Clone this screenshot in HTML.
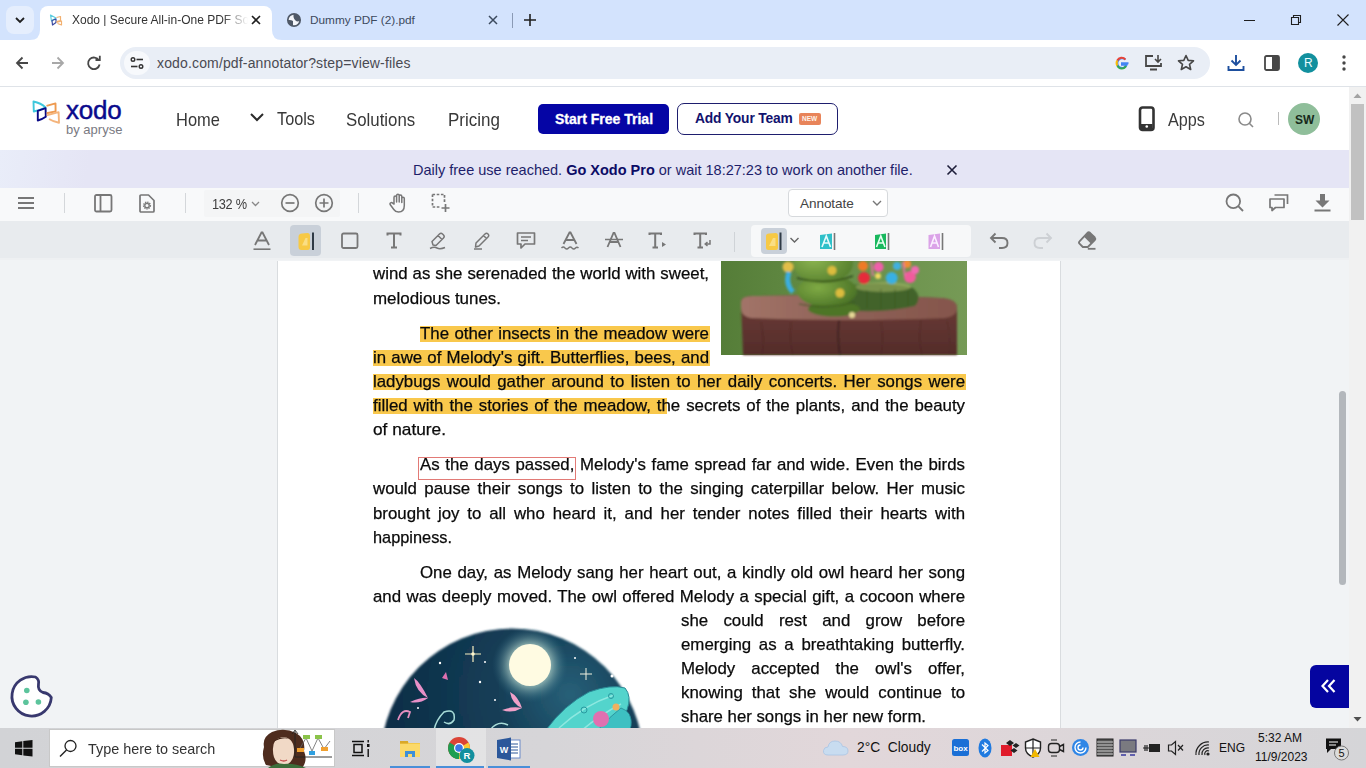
<!DOCTYPE html>
<html><head><meta charset="utf-8">
<style>
*{box-sizing:border-box;margin:0;padding:0}
html,body{width:1366px;height:768px;overflow:hidden;background:#fff;font-family:"Liberation Sans",sans-serif;}
.a{position:absolute}
.t{position:absolute;white-space:pre;line-height:1}
svg{position:absolute;overflow:visible}
</style></head><body>

<!-- ===== TAB STRIP ===== -->
<div class="a" style="left:0;top:0;width:1366px;height:40px;background:#d3e3fd"></div>
<div class="a" style="left:6px;top:6px;width:28px;height:28px;border-radius:8px;background:#e5eefd"></div>
<svg style="left:0;top:0" width="40" height="40"><path d="M16 18 L20 22 L24 18" fill="none" stroke="#1f1f1f" stroke-width="1.8"/></svg>
<!-- active tab -->
<div class="a" style="left:40px;top:6px;width:232px;height:36px;border-radius:8px 8px 0 0;background:#fff"></div>
<svg style="left:30px;top:30px" width="10" height="10"><path d="M0 10 L10 10 L10 0 Q10 10 0 10Z" fill="#fff"/></svg>
<svg style="left:272px;top:30px" width="10" height="10"><path d="M0 0 L0 10 L10 10 Q0 10 0 0Z" fill="#fff"/></svg>
<svg style="left:49px;top:14px" width="14" height="12"><path d="M1.5 1 L7 4 L2.5 7Z" fill="none" stroke="#5ccde0" stroke-width="1.2" stroke-linejoin="round"/><path d="M3 6.5 L7 5 L7 8.5 L3.5 11Z" fill="none" stroke="#3a4aa0" stroke-width="1.2" stroke-linejoin="round"/><path d="M7.5 3.5 L11.5 2.5 V6.5 L7.5 7.5 M7.5 8.5 L12.5 7 V11 L8.5 9.5" fill="none" stroke="#f2b070" stroke-width="1.2" stroke-linejoin="round"/></svg>
<div class="t" style="left:72px;top:14px;font-size:12px;color:#333;width:178px;overflow:hidden;-webkit-mask-image:linear-gradient(90deg,#000 150px,transparent 176px)">Xodo | Secure All-in-One PDF Software</div>
<svg style="left:250px;top:14px" width="12" height="12"><path d="M2 2 L10 10 M10 2 L2 10" stroke="#1f1f1f" stroke-width="1.6"/></svg>
<!-- tab 2 -->
<svg style="left:286px;top:12px" width="16" height="16"><circle cx="8" cy="8" r="6.2" fill="#f4f6fb" stroke="#4f5968" stroke-width="1.7"/><path d="M7.5 2 Q12 2 14 6 L14 9 Q11 10 9.5 8.5 Q8 7 7.5 5Z" fill="#4f5968"/><path d="M2 8 Q5 7.5 7 9 L7 14 Q3 13 2 10Z" fill="#4f5968"/></svg>
<div class="t" style="left:310px;top:15px;font-size:11.8px;color:#3c4a5e">Dummy PDF (2).pdf</div>
<svg style="left:487px;top:14px" width="12" height="12"><path d="M2 2 L10 10 M10 2 L2 10" stroke="#3c4a5e" stroke-width="1.5"/></svg>
<div class="a" style="left:512px;top:13px;width:1px;height:15px;background:#8a9ab5"></div>
<svg style="left:522px;top:12px" width="16" height="16"><path d="M8 2 V14 M2 8 H14" stroke="#1f1f1f" stroke-width="1.6"/></svg>
<!-- window controls -->
<svg style="left:1244px;top:14px" width="12" height="12"><path d="M0 6.5 H11" stroke="#1f1f1f" stroke-width="1"/></svg>
<svg style="left:1290px;top:14px" width="12" height="12"><path d="M1.5 3.5 H8.5 V10.5 H1.5Z M3.5 3.5 V1.5 H10.5 V8.5 H8.5" fill="none" stroke="#1f1f1f" stroke-width="1.1"/></svg>
<svg style="left:1337px;top:14px" width="12" height="12"><path d="M0.5 0.5 L11.5 11.5 M11.5 0.5 L0.5 11.5" stroke="#1f1f1f" stroke-width="1.1"/></svg>

<!-- ===== TOOLBAR ===== -->
<div class="a" style="left:0;top:40px;width:1366px;height:47px;background:#fff;border-bottom:1px solid #dfe3e8;border-radius:0 8px 0 0"></div>
<svg style="left:12px;top:53px" width="20" height="20"><path d="M16 10 H5 M10.5 4.5 L5 10 L10.5 15.5" fill="none" stroke="#474747" stroke-width="1.8"/></svg>
<svg style="left:48px;top:53px" width="20" height="20"><path d="M4 10 H15 M9.5 4.5 L15 10 L9.5 15.5" fill="none" stroke="#a8a8a8" stroke-width="1.8"/></svg>
<svg style="left:84px;top:53px" width="20" height="20"><path d="M15 7.5 A5.8 5.8 0 1 0 15.6 11.5" fill="none" stroke="#474747" stroke-width="1.8"/><path d="M11.5 7 H15.8 V2.8" fill="none" stroke="#474747" stroke-width="1.8"/></svg>
<div class="a" style="left:120px;top:47px;width:1090px;height:32px;border-radius:16px;background:#e9eef6"></div>
<div class="a" style="left:124px;top:51px;width:26px;height:24px;border-radius:12px;background:#f7f9fc"></div>
<svg style="left:129px;top:55px" width="16" height="16"><circle cx="4" cy="4.5" r="1.8" fill="none" stroke="#333" stroke-width="1.4"/><path d="M7.5 4.5 H14" stroke="#333" stroke-width="1.6"/><circle cx="12" cy="11.5" r="1.8" fill="none" stroke="#333" stroke-width="1.4"/><path d="M2 11.5 H8.5" stroke="#333" stroke-width="1.6"/></svg>
<div class="t" style="left:157px;top:56px;font-size:14px;letter-spacing:0.15px;color:#4a4a52">xodo.com/pdf-annotator?step=view-files</div>
<!-- right toolbar icons -->
<svg style="left:1114px;top:55px" width="16" height="16"><path d="M14.5 8.2 H8 V9.8 H12.6 A4.8 4.8 0 1 1 11.4 4.6" fill="none" stroke="#4285f4" stroke-width="2"/><path d="M3.3 5.5 A4.8 4.8 0 0 1 11.4 4.6" fill="none" stroke="#ea4335" stroke-width="2"/><path d="M3.3 5.5 A4.8 4.8 0 0 0 3.4 10.6" fill="none" stroke="#fbbc05" stroke-width="2"/><path d="M3.4 10.6 A4.8 4.8 0 0 0 12 11" fill="none" stroke="#34a853" stroke-width="2"/></svg>
<svg style="left:1144px;top:53px" width="20" height="20"><path d="M9 3 H2 V13 H17 V10" fill="none" stroke="#474747" stroke-width="1.8"/><path d="M6 16.5 H13" stroke="#474747" stroke-width="2"/><path d="M14 2 V9 M11 6 L14 9 L17 6" fill="none" stroke="#474747" stroke-width="1.6"/></svg>
<svg style="left:1176px;top:53px" width="20" height="20"><path d="M10 2.5 L12.2 7.4 L17.5 7.8 L13.5 11.3 L14.7 16.5 L10 13.8 L5.3 16.5 L6.5 11.3 L2.5 7.8 L7.8 7.4Z" fill="none" stroke="#474747" stroke-width="1.6" stroke-linejoin="round"/></svg>
<svg style="left:1226px;top:53px" width="20" height="20"><path d="M10 2 V12 M5.5 7.5 L10 12 L14.5 7.5" fill="none" stroke="#1d4f9e" stroke-width="1.9"/><path d="M2.5 13 V17 H17.5 V13" fill="none" stroke="#1d4f9e" stroke-width="1.9"/></svg>
<svg style="left:1262px;top:53px" width="20" height="20"><rect x="3" y="3" width="14" height="14" rx="1.5" fill="none" stroke="#474747" stroke-width="1.8"/><rect x="10" y="3" width="7" height="14" fill="#474747"/></svg>
<div class="a" style="left:1298px;top:53px;width:20px;height:20px;border-radius:10px;background:#12909e"></div>
<div class="t" style="left:1304px;top:57px;font-size:12px;color:#eafcff">R</div>
<svg style="left:1340px;top:53px" width="8" height="20"><circle cx="4" cy="4" r="1.7" fill="#474747"/><circle cx="4" cy="10" r="1.7" fill="#474747"/><circle cx="4" cy="16" r="1.7" fill="#474747"/></svg>

<!-- ===== PAGE ===== -->
<!-- header -->
<div class="a" style="left:0;top:87px;width:1349px;height:63px;background:#fff"></div>
<svg style="left:32px;top:100px" width="30" height="25">
 <path d="M1.5 1.5 Q9 3 13.5 7.5 Q8 10 1.8 11.5 Z" fill="none" stroke="#3ec8dc" stroke-width="1.9" stroke-linejoin="round"/>
 <path d="M5.8 10.8 L13.6 8.2 L13.8 16.8 Q10 19.5 5.8 20.5 Z" fill="none" stroke="#0a0a86" stroke-width="1.9" stroke-linejoin="round"/>
 <path d="M14.5 5.8 L23.5 3.4 L23.6 11.4 L14.6 13.3" fill="none" stroke="#ee9a50" stroke-width="1.9" stroke-linejoin="round"/>
 <path d="M14.6 15.4 L26.6 12.2 L27 22.8 Q21 21.5 17 19" fill="none" stroke="#f4b47c" stroke-width="1.9" stroke-linejoin="round"/>
</svg>
<div class="t" style="left:66px;top:97px;font-size:26px;color:#0a0a8c;letter-spacing:-0.2px;-webkit-text-stroke:0.45px #0a0a8c">xodo</div>
<div class="t" style="left:66px;top:123px;font-size:13px;color:#7a7a82">by apryse</div>
<div class="t" style="left:176px;top:111.5px;font-size:17.8px;color:#383838;transform:scaleX(0.925);transform-origin:0 0">Home</div>
<svg style="left:248px;top:110px" width="18" height="14"><path d="M3 4 L9 10 L15 4" fill="none" stroke="#2b2b2b" stroke-width="2"/></svg>
<div class="t" style="left:277px;top:110.5px;font-size:17.8px;color:#383838;transform:scaleX(0.915);transform-origin:0 0">Tools</div>
<div class="t" style="left:346px;top:111.5px;font-size:17.8px;color:#383838;transform:scaleX(0.945);transform-origin:0 0">Solutions</div>
<div class="t" style="left:448px;top:111.5px;font-size:17.8px;color:#383838;transform:scaleX(0.955);transform-origin:0 0">Pricing</div>
<div class="a" style="left:538px;top:104px;width:131px;height:30px;border-radius:5px;background:#0505a5"></div>
<div class="t" style="left:555px;top:112px;font-size:14px;font-weight:700;color:#fff;-webkit-text-stroke:0.3px #fff">Start Free Trial</div>
<div class="a" style="left:677px;top:103px;width:161px;height:32px;border-radius:7px;border:1.5px solid #1e1e6e;background:#fff"></div>
<div class="t" style="left:695px;top:112px;font-size:13.8px;letter-spacing:-0.15px;font-weight:700;color:#12126e">Add Your Team</div>
<div class="a" style="left:799px;top:113px;width:22px;height:12px;border-radius:2px;background:#e8845a"></div>
<div class="t" style="left:802px;top:116px;font-size:6.5px;font-weight:700;color:#fff4ec">NEW</div>
<svg style="left:1138px;top:106px" width="18" height="26"><rect x="2" y="1.5" width="13.5" height="22.5" rx="2.5" fill="none" stroke="#333" stroke-width="2.6"/><rect x="3" y="18" width="11.5" height="5" fill="#333"/><circle cx="8.75" cy="20.5" r="1.3" fill="#fff"/></svg>
<div class="t" style="left:1168px;top:111.5px;font-size:17.8px;color:#3a3a3a;transform:scaleX(0.91);transform-origin:0 0">Apps</div>
<svg style="left:1236px;top:110px" width="20" height="20"><circle cx="9" cy="9" r="6" fill="none" stroke="#8a8a8a" stroke-width="1.6"/><path d="M13.3 13.3 L17 17" stroke="#8a8a8a" stroke-width="1.6"/></svg>
<div class="a" style="left:1278px;top:112px;width:1px;height:13px;background:#bbb"></div>
<div class="a" style="left:1288px;top:103px;width:32px;height:32px;border-radius:16px;background:#8fbe9a"></div>
<div class="t" style="left:1295px;top:114px;font-size:12px;font-weight:700;color:#172a1a">SW</div>
<!-- banner -->
<div class="a" style="left:0;top:150px;width:1349px;height:38px;background:linear-gradient(100deg,#e9edf9 0px,#e5e5f5 90px,#e5e5f5 100%)"></div>
<!-- toolbar 1 -->
<div class="a" style="left:0;top:188px;width:1349px;height:33px;background:#f8f9fa"></div>
<!-- toolbar 2 -->
<div class="a" style="left:0;top:221px;width:1349px;height:37px;background:#e8ebee"></div>
<!-- banner text -->
<div class="t" style="left:413px;top:163px;font-size:14.5px;color:#1e1e6a">Daily free use reached. <b style="color:#0c0c66">Go Xodo Pro</b> or wait 18:27:23 to work on another file.</div>
<svg style="left:945px;top:163px" width="14" height="14"><path d="M2.5 2.5 L11.5 11.5 M11.5 2.5 L2.5 11.5" stroke="#1e1e3a" stroke-width="1.6"/></svg>
<!-- toolbar1 icons -->
<svg style="left:18px;top:197px" width="17" height="12"><path d="M0 1 H16 M0 6 H16 M0 11 H16" stroke="#777" stroke-width="1.8"/></svg>
<div class="a" style="left:64px;top:193px;width:1px;height:20px;background:#d4d7da"></div>
<svg style="left:94px;top:194px" width="19" height="19"><rect x="1" y="1" width="16.5" height="16.5" rx="1.5" fill="none" stroke="#777" stroke-width="1.8"/><path d="M6.5 1 V17.5" stroke="#777" stroke-width="1.8"/></svg>
<svg style="left:139px;top:194px" width="17" height="19"><path d="M1 2 Q1 1 2 1 H9.5 L15 6.5 V17 Q15 18 14 18 H2 Q1 18 1 17Z" fill="none" stroke="#777" stroke-width="1.7" stroke-linejoin="round"/><circle cx="8" cy="11.5" r="3.3" fill="none" stroke="#777" stroke-width="1.6" stroke-dasharray="1.3 0.9"/><circle cx="8" cy="11.5" r="2.2" fill="none" stroke="#777" stroke-width="1.3"/></svg>
<div class="a" style="left:185px;top:193px;width:1px;height:20px;background:#d4d7da"></div>
<div class="a" style="left:204px;top:190px;width:136px;height:27px;background:#f4f5f6;border-radius:2px"></div>
<div class="t" style="left:212px;top:197px;font-size:14px;color:#3f3f3f;letter-spacing:-0.3px;transform:scaleX(0.91);transform-origin:0 0">132 %</div>
<svg style="left:251px;top:200px" width="10" height="8"><path d="M1 2 L4.5 5.5 L8 2" fill="none" stroke="#888" stroke-width="1.3"/></svg>
<svg style="left:280px;top:193px" width="20" height="20"><circle cx="10" cy="10" r="8.3" fill="none" stroke="#777" stroke-width="1.7"/><path d="M5.5 10 H14.5" stroke="#777" stroke-width="1.7"/></svg>
<svg style="left:314px;top:193px" width="20" height="20"><circle cx="10" cy="10" r="8.3" fill="none" stroke="#777" stroke-width="1.7"/><path d="M5.5 10 H14.5 M10 5.5 V14.5" stroke="#777" stroke-width="1.7"/></svg>
<div class="a" style="left:358px;top:193px;width:1px;height:20px;background:#d4d7da"></div>
<svg style="left:388px;top:193px" width="20" height="21"><path d="M6 11 V4.5 Q6 3 7.3 3 Q8.6 3 8.6 4.5 V9 V2.8 Q8.6 1.3 9.9 1.3 Q11.2 1.3 11.2 2.8 V9 V3.5 Q11.2 2 12.5 2 Q13.8 2 13.8 3.5 V9.5 V5.5 Q13.8 4.2 15 4.2 Q16.3 4.2 16.3 5.5 V12.5 Q16.3 19 10.5 19 Q7.5 19 5.8 16.5 L2.3 11.8 Q1.5 10.5 2.7 9.8 Q3.8 9.2 4.8 10.3 Z" fill="none" stroke="#777" stroke-width="1.5" stroke-linejoin="round"/></svg>
<svg style="left:431px;top:193px" width="20" height="20"><path d="M1.5 1.5 H13.5 V9 M1.5 1.5 V14 H9" fill="none" stroke="#777" stroke-width="1.7" stroke-dasharray="2.6 1.6"/><path d="M14.5 11 V19 M10.5 15 H18.5" stroke="#777" stroke-width="1.7"/></svg>
<div class="a" style="left:788px;top:189px;width:100px;height:28px;border:1px solid #d6d9dc;border-radius:4px;background:#fff"></div>
<div class="t" style="left:800px;top:197px;font-size:13.6px;color:#444;letter-spacing:-0.1px">Annotate</div>
<svg style="left:871px;top:199px" width="12" height="9"><path d="M2 2 L6 6 L10 2" fill="none" stroke="#777" stroke-width="1.4"/></svg>
<svg style="left:1225px;top:193px" width="20" height="20"><circle cx="8.3" cy="8.3" r="6.8" fill="none" stroke="#777" stroke-width="1.8"/><path d="M13.2 13.2 L18 18" stroke="#777" stroke-width="1.9"/></svg>
<svg style="left:1269px;top:193px" width="21" height="20"><path d="M5.5 2 H18.5 V11" fill="none" stroke="#777" stroke-width="1.7"/><path d="M1 6 H15 V14.5 H6.5 L3 17.5 V14.5 H1 Z" fill="none" stroke="#777" stroke-width="1.7" stroke-linejoin="round"/></svg>
<svg style="left:1314px;top:193px" width="18" height="20"><path d="M6 1 H11 V7.5 H15.5 L8.5 14.5 L1.5 7.5 H6Z" fill="#777"/><path d="M0.5 17.5 H16.5" stroke="#777" stroke-width="2"/></svg>
<!-- toolbar2 icons -->
<svg style="left:252px;top:231px" width="20" height="20"><path d="M3 14 L9.5 1.5 H10.5 L17 14 M5.5 9.5 H14.5" fill="none" stroke="#777" stroke-width="1.8"/><path d="M1.5 18.2 H18.5" stroke="#777" stroke-width="1.6"/></svg>
<div class="a" style="left:290px;top:225px;width:31px;height:31px;border-radius:4px;background:#c9d0d9"></div>
<svg style="left:297px;top:232px" width="18" height="19"><path d="M1.5 5 Q1.5 1.5 5 1.5 L10.5 1 Q13 1 13 4 V15.5 Q13 18 10.5 18 H4.5 Q1.5 18 1.5 15Z" fill="#f7c945"/><path d="M5 13.5 L8.5 6 L10.5 6 V13.5 Z" fill="#fbe7a0" opacity="0.7"/><path d="M16 0.5 V18" stroke="#2f3a46" stroke-width="2"/></svg>
<svg style="left:341px;top:232px" width="18" height="18"><rect x="1" y="1.5" width="15.5" height="14.5" rx="1.5" fill="none" stroke="#777" stroke-width="1.8"/></svg>
<svg style="left:385px;top:232px" width="18" height="18"><path d="M2.5 3.5 V1.5 H15.5 V3.5 M9 1.5 V15.5 M6 15.5 H12" fill="none" stroke="#777" stroke-width="2"/></svg>
<svg style="left:428px;top:231px" width="20" height="20"><path d="M5 14 L4 10.5 L11.5 3 Q13 1.5 14.5 3 L15.5 4 Q17 5.5 15.5 7 L8 14.5 Z M10 4.5 L14 8.5" fill="none" stroke="#777" stroke-width="1.5" stroke-linejoin="round"/><path d="M2 17.5 Q6 15.5 9 17 Q12 18.5 17 16.5" fill="none" stroke="#777" stroke-width="1.5"/></svg>
<svg style="left:472px;top:231px" width="20" height="20"><path d="M3.5 16 L4 12 L13 3 Q14.5 1.5 16 3 Q17.5 4.5 16 6 L7 15 Z M11.5 4.5 L14.5 7.5" fill="none" stroke="#777" stroke-width="1.5" stroke-linejoin="round"/><path d="M2 18 H10" stroke="#777" stroke-width="1.5"/></svg>
<svg style="left:516px;top:231px" width="20" height="20"><path d="M1.5 2 H18.5 V13 H9 L5 17 V13 H1.5 Z" fill="none" stroke="#777" stroke-width="1.7" stroke-linejoin="round"/><path d="M5 6 H15 M5 9.5 H12" stroke="#777" stroke-width="1.5"/></svg>
<svg style="left:560px;top:231px" width="20" height="20"><path d="M3.5 13 L9.5 1.5 H10.5 L16.5 13 M5.5 9 H14.5" fill="none" stroke="#777" stroke-width="1.8"/><path d="M1.5 17 Q3.3 15 5 17 Q6.8 19 8.5 17 Q10.3 15 12 17 Q13.8 19 15.5 17 Q17 15.5 18.5 17" fill="none" stroke="#777" stroke-width="1.4"/></svg>
<svg style="left:604px;top:231px" width="20" height="20"><path d="M3.5 16 L9.5 2 H10.5 L16.5 16 M5.8 11 H14.2" fill="none" stroke="#777" stroke-width="1.8"/><path d="M1 8.5 H19" stroke="#777" stroke-width="1.5"/></svg>
<svg style="left:648px;top:232px" width="20" height="18"><path d="M1.5 3 V1.5 H13 V3 M7.2 1.5 V15.5 M4.5 15.5 H10" fill="none" stroke="#777" stroke-width="2"/><path d="M14 10 L18 12.5 L14 15 Z" fill="#777"/></svg>
<svg style="left:693px;top:232px" width="20" height="18"><path d="M1.5 3 V1.5 H13 V3 M7.2 1.5 V15.5 M4.5 15.5 H10" fill="none" stroke="#777" stroke-width="2"/><path d="M17 8 V12 H12.5 M14.5 10 L12.2 12 L14.5 14" fill="none" stroke="#777" stroke-width="1.5"/></svg>
<div class="a" style="left:734px;top:232px;width:1px;height:20px;background:#cfd3d7"></div>
<div class="a" style="left:751px;top:225px;width:220px;height:32px;border-radius:4px;background:#f7f8f9"></div>
<div class="a" style="left:761px;top:228px;width:26px;height:26px;border-radius:4px;background:#c9d0d9"></div>
<svg style="left:765px;top:232px" width="18" height="19"><path d="M1 4 Q1 1.5 4 1.5 L11 1 Q13 1 13 3.5 V16 Q13 18 11 18 H3.5 Q1 18 1 15.5Z" fill="#f7c945"/><path d="M4 14 L8 6 L10.5 6 V14 Z" fill="#fbe7a0" opacity="0.7"/><path d="M15.5 0.5 V18" stroke="#2f3a46" stroke-width="2"/></svg>
<svg style="left:789px;top:236px" width="11" height="9"><path d="M1.5 2 L5.5 6 L9.5 2" fill="none" stroke="#666" stroke-width="1.4"/></svg>
<svg style="left:818px;top:232px" width="19" height="19"><path d="M2 3 L14 1.5 V17 H2 Z" fill="#2fc0c9"/><path d="M4 15 L8.3 4 L12.5 15 M5.6 11 H11" fill="none" stroke="#e8fbfc" stroke-width="1.6"/><path d="M16.5 1 V18" stroke="#777" stroke-width="1.6"/></svg>
<svg style="left:873px;top:232px" width="19" height="19"><path d="M2 3 L13 1.5 V17 H2 Z" fill="#19b85e"/><path d="M3.5 15 L7.8 4 L12 15 M5.1 11 H10.5" fill="none" stroke="#e6fff0" stroke-width="1.6"/><path d="M15.5 1 V18" stroke="#777" stroke-width="1.6"/></svg>
<svg style="left:927px;top:232px" width="19" height="19"><path d="M1.5 3 L13 1.5 V17 H1.5 Z" fill="#dba3e8"/><path d="M3.5 15 L7.5 4 L11.5 15 M5 11 H10" fill="none" stroke="#fbf0ff" stroke-width="1.6"/><path d="M15.5 1 V18" stroke="#777" stroke-width="1.6"/></svg>
<svg style="left:989px;top:232px" width="21" height="18"><path d="M6.5 1.5 L2 6 L6.5 10.5 M2 6 H13 Q18.5 6 18.5 11 Q18.5 16 13 16 H10" fill="none" stroke="#777" stroke-width="1.9"/></svg>
<svg style="left:1032px;top:232px" width="21" height="18"><path d="M14.5 1.5 L19 6 L14.5 10.5 M19 6 H8 Q2.5 6 2.5 11 Q2.5 16 8 16 H11" fill="none" stroke="#cdd0d4" stroke-width="1.9"/></svg>
<svg style="left:1077px;top:231px" width="20" height="20"><path d="M10.5 1.8 Q11.8 0.8 13 1.8 L17.8 6.5 Q19 7.8 17.8 9 L10.8 16 H5.8 L2.5 12.7 Q1.3 11.5 2.5 10.3 Z" fill="none" stroke="#777" stroke-width="1.8" stroke-linejoin="round"/><path d="M10.5 1.8 Q11.8 0.8 13 1.8 L17.8 6.5 Q19 7.8 17.8 9 L14 12.8 L6.8 5.5 Z" fill="#777"/><path d="M10.8 17.8 H18.5" stroke="#777" stroke-width="1.8"/></svg>
<!-- doc area -->
<div class="a" style="left:0;top:258px;width:1349px;height:470px;background:#f1f3f5"></div><div class="a" style="left:0;top:258px;width:1349px;height:2px;background:#eef0f2"></div>
<div class="a" style="left:277px;top:261px;width:784px;height:467px;background:#fff;border-left:1px solid #d9dcdf;border-right:1px solid #d9dcdf"></div>

<!-- document content -->
<div class="a" style="left:0;top:0;width:1366px;height:768px;clip-path:inset(261px 17px 40px 0)">
<style>
.dl{position:absolute;white-space:pre;line-height:1;font-size:17px;color:#0a0a0a;-webkit-text-stroke:0.25px #0a0a0a;transform-origin:0 0}
.dl.j{text-align:justify;text-align-last:justify;transform:scaleX(0.99)}
</style>
<!-- highlights -->
<div class="a" style="left:420px;top:325.8px;width:290px;height:16px;background:#f9c84c"></div>
<div class="a" style="left:373px;top:349.7px;width:337px;height:16px;background:#f9c84c"></div>
<div class="a" style="left:373px;top:373.7px;width:593px;height:16px;background:#f9c84c"></div>
<div class="a" style="left:373px;top:397.7px;width:294px;height:16px;background:#f9c84c"></div>
<!-- caterpillar image -->
<svg style="left:721px;top:240px" width="246" height="115" viewBox="0 0 246 115">
 <defs>
  <linearGradient id="cbg" x1="0" y1="0" x2="1" y2="0"><stop offset="0" stop-color="#557d38"/><stop offset="0.5" stop-color="#678f48"/><stop offset="1" stop-color="#769a56"/></linearGradient>
  <linearGradient id="stump" x1="0" y1="0" x2="0" y2="1"><stop offset="0" stop-color="#6e3e38"/><stop offset="1" stop-color="#542c2a"/></linearGradient>
  <linearGradient id="ctop" x1="0" y1="0" x2="1" y2="0"><stop offset="0" stop-color="#a27468"/><stop offset="0.5" stop-color="#8e6056"/><stop offset="1" stop-color="#85564c"/></linearGradient>
  <radialGradient id="cat" cx="0.35" cy="0.4" r="0.7"><stop offset="0" stop-color="#8cb450"/><stop offset="1" stop-color="#557e2c"/></radialGradient>
  <radialGradient id="cat2" cx="0.35" cy="0.4" r="0.7"><stop offset="0" stop-color="#7faa44"/><stop offset="1" stop-color="#4a7226"/></radialGradient>
  <filter id="bl"><feGaussianBlur stdDeviation="1.1"/></filter>
 </defs>
 <rect width="246" height="115" fill="url(#cbg)"/>
 <g filter="url(#bl)">
 <path d="M20 62 Q20 56 32 56 Q120 54 220 58 Q236 59 236 68 L236 115 L22 115 Z" fill="url(#stump)"/>
 <path d="M20 62 Q20 56 32 56 Q120 54 220 58 Q236 59 236 68 Q236 76 224 78 Q120 82 30 78 Q20 76 20 68Z" fill="url(#ctop)"/>
 <path d="M118 80 Q116 98 119 115" stroke="#3a2020" stroke-width="1.6" fill="none"/><path d="M40 82 Q44 100 41 115 M70 82 Q68 100 72 115 M160 82 Q163 100 160 115 M200 80 Q197 100 201 115" stroke="#44221f" stroke-width="1.2" fill="none" opacity="0.45"/>
 <path d="M226 80 Q230 100 228 115" stroke="#4a2826" stroke-width="1" fill="none" opacity="0.5"/>
 <path d="M122 46 Q160 40 192 48 Q202 57 194 66 Q160 74 122 70 Z" fill="#42642a"/>
 <ellipse cx="162" cy="47" rx="28" ry="5" fill="#a8b866" opacity="0.55"/>
 <path d="M146 50 V68 M160 49 V69 M174 49 V69 M187 51 V66" stroke="#2f4a1a" stroke-width="1.2" opacity="0.4"/>
 <ellipse cx="113" cy="69" rx="26" ry="7.5" fill="#4e7428"/>
 <ellipse cx="106" cy="51" rx="30" ry="16" fill="url(#cat2)"/>
 <ellipse cx="102" cy="23" rx="30" ry="20" fill="url(#cat)"/>
 <path d="M76 38 Q104 46 132 36" stroke="#2f4a18" stroke-width="1.6" fill="none"/>
 <path d="M78 64 Q106 70 134 62" stroke="#3a5a1e" stroke-width="1.2" fill="none"/>
 <circle cx="67" cy="27" r="5.5" fill="#e2be4a"/>
 <circle cx="111" cy="30.5" r="4.5" fill="#dcbc3e"/>
 <circle cx="119" cy="53" r="4.5" fill="#dcbc3e"/>
 <circle cx="131" cy="75" r="3" fill="#e6d896"/>
 <path d="M68 32 Q64 44 72 52" stroke="#3aaee0" stroke-width="5" fill="none"/>
 <circle cx="142" cy="26" r="5" fill="#f07a28"/>
 <circle cx="143" cy="38" r="6" fill="#e62c3a"/>
 <circle cx="157.6" cy="27" r="5" fill="#f05eaa"/>
 <circle cx="157" cy="36" r="3" fill="#f0d860"/>
 <circle cx="170.7" cy="38" r="6" fill="#38b0e4"/>
 <circle cx="176" cy="26" r="4" fill="#40b0e0"/>
 <circle cx="189" cy="37" r="6" fill="#f05c9c"/>
 <circle cx="186" cy="24" r="4" fill="#f08c38"/>
 <circle cx="194" cy="30" r="4" fill="#f06ab0"/>
 <path d="M150 22 L152 36 M182 22 L184 36" stroke="#f070b0" stroke-width="2" opacity="0.8"/>
 </g>
</svg>
<!-- moon image -->
<svg style="left:340px;top:600px" width="330" height="160" viewBox="0 0 330 160">
 <defs>
  <radialGradient id="sky" cx="0.72" cy="0.25" r="0.75"><stop offset="0" stop-color="#286078"/><stop offset="0.35" stop-color="#143f58"/><stop offset="1" stop-color="#0d2b44"/></radialGradient>
  <radialGradient id="glow" cx="0.5" cy="0.5" r="0.5"><stop offset="0.4" stop-color="#fffbe6"/><stop offset="0.55" stop-color="#c8e6d8" stop-opacity="0.6"/><stop offset="1" stop-color="#2a6a80" stop-opacity="0"/></radialGradient>
  <radialGradient id="vig" cx="0.5" cy="0.9" r="0.7"><stop offset="0.6" stop-color="#eef2f3" stop-opacity="0.6"/><stop offset="1" stop-color="#fff" stop-opacity="0"/></radialGradient>
  <filter id="bl2"><feGaussianBlur stdDeviation="0.6"/></filter>
  <filter id="bl3"><feGaussianBlur stdDeviation="1.2"/></filter>
 </defs>
 
 <circle cx="172" cy="160" r="131.5" fill="url(#sky)" filter="url(#bl3)"/>
 <circle cx="190" cy="65" r="38" fill="url(#glow)"/>
 <circle cx="190" cy="65" r="21" fill="#fffbe2"/>
 <g filter="url(#bl2)">
 <g transform="translate(9,0)"><path d="M197 130 Q215 105 240 92 Q262 84 276 88 Q283 96 278 110 Q270 125 258 135 L230 160 L195 160 Z" fill="#52d4cc" stroke="#2a8a96" stroke-width="1"/>
 <path d="M225 160 Q250 125 272 108 Q284 112 282 126 Q276 148 262 160Z" fill="#3cc0c2" stroke="#2a8a96" stroke-width="0.8"/>
 <path d="M210 128 Q235 105 265 95 M222 140 Q245 118 272 104" stroke="#8ee8e0" stroke-width="1.5" fill="none"/>
 <circle cx="235" cy="110" r="3" fill="none" stroke="#2a9aa0" stroke-width="1"/><circle cx="262" cy="96" r="2.5" fill="none" stroke="#2a9aa0" stroke-width="1"/>
 <ellipse cx="252" cy="119" rx="8" ry="8" fill="#e070b0"/>
 <circle cx="267" cy="107" r="3.5" fill="#f0b060"/></g>
 <path d="M88 98 Q80 82 74 78 Q76 92 88 98Z M88 98 Q82 97 70 102 Q80 104 88 98Z" fill="#e890c8"/>
 <path d="M182 108 Q178 96 170 92 Q172 104 182 108Z M182 108 Q172 106 162 110 Q172 114 182 108Z" fill="#f0a0c8"/>
 <path d="M102 78 L106 72 L108 80 Z" fill="#e070b0"/>
 <path d="M58 120 Q62 108 70 112 L68 118" fill="none" stroke="#e890c0" stroke-width="1.8"/>
 <path d="M98 160 Q86 130 104 112 Q116 108 114 120 Q110 126 104 122 M130 160 Q124 138 136 130 Q146 128 146 138 M176 160 Q168 140 180 132 Q190 130 190 140 M150 130 Q158 120 168 125" fill="none" stroke="#a8dcd8" stroke-width="1.5"/>
 <circle cx="118" cy="136" r="2.5" fill="none" stroke="#a8dcd8" stroke-width="1"/>
 <circle cx="100" cy="63" r="1.2" fill="#fff"/><circle cx="272" cy="76" r="1.5" fill="#fff"/><circle cx="140" cy="82" r="1.2" fill="#fff"/><circle cx="95" cy="130" r="1" fill="#fff"/><circle cx="235" cy="58" r="1" fill="#fff"/><circle cx="145" cy="62" r="1" fill="#fff"/><circle cx="155" cy="100" r="1" fill="#fff"/><circle cx="78" cy="108" r="1" fill="#fff"/>
 <path d="M133 46 V62 M125 54 H141" stroke="#f8f0c0" stroke-width="1.2"/><circle cx="133" cy="54" r="1.8" fill="#fff8d0"/>
 <path d="M246 68 V80 M240 74 H252" stroke="#f0f0e0" stroke-width="1"/>
 </g>
</svg>
<div class="dl j" style="left:373px;top:265.4px;width:339.4px">wind as she serenaded the world with sweet,</div>
<div class="dl" style="left:373px;top:289.5px;transform:scaleX(0.996)">melodious tunes.</div>
<div class="dl j" style="left:420px;top:324.7px;width:291.9px">The other insects in the meadow were</div>
<div class="dl j" style="left:373px;top:348.6px;width:339.4px">in awe of Melody&#39;s gift. Butterflies, bees, and</div>
<div class="dl j" style="left:373px;top:372.6px;width:598.0px">ladybugs would gather around to listen to her daily concerts. Her songs were</div>
<div class="dl j" style="left:373px;top:396.6px;width:598.0px">filled with the stories of the meadow, the secrets of the plants, and the beauty</div>
<div class="dl" style="left:373px;top:420.8px;transform:scaleX(1.016)">of nature.</div>
<div class="dl j" style="left:420px;top:456.4px;width:550.5px">As the days passed, Melody&#39;s fame spread far and wide. Even the birds</div>
<div class="dl j" style="left:373px;top:480.4px;width:598.0px">would pause their songs to listen to the singing caterpillar below. Her music</div>
<div class="dl j" style="left:373px;top:504.7px;width:598.0px">brought joy to all who heard it, and her tender notes filled their hearts with</div>
<div class="dl" style="left:373px;top:528.8px;transform:scaleX(0.961)">happiness.</div>
<div class="dl j" style="left:420px;top:563.7px;width:550.5px">One day, as Melody sang her heart out, a kindly old owl heard her song</div>
<div class="dl j" style="left:373px;top:587.8px;width:598.0px">and was deeply moved. The owl offered Melody a special gift, a cocoon where</div>
<div class="dl j" style="left:681px;top:611.9px;width:286.9px">she could rest and grow before</div>
<div class="dl j" style="left:681px;top:635.9px;width:286.9px">emerging as a breathtaking butterfly.</div>
<div class="dl j" style="left:681px;top:660.0px;width:286.9px">Melody accepted the owl&#39;s offer,</div>
<div class="dl j" style="left:681px;top:684.0px;width:286.9px">knowing that she would continue to</div>
<div class="dl" style="left:681px;top:708.1px;transform:scaleX(0.986)">share her songs in her new form.</div>
<!-- red annotation rect -->
<div class="a" style="left:418px;top:457px;width:158px;height:23px;border:1px solid #e27a76"></div>
</div>
<!-- inner scrollbar + collapse button + cookie -->
<div class="a" style="left:1339px;top:391px;width:7px;height:194px;border-radius:4px;background:#b3b7bc"></div>
<div class="a" style="left:1310px;top:665px;width:39px;height:43px;border-radius:6px 0 0 6px;background:#0505a0"></div>
<svg style="left:1318px;top:676px" width="22" height="20"><path d="M10 4 L4.5 10 L10 16 M16.5 4 L11 10 L16.5 16" fill="none" stroke="#fff" stroke-width="2.2"/></svg>
<svg style="left:0px;top:660px" width="60" height="60"><path d="M35.5 17 Q39.5 20 38.5 24 Q37.5 30.5 43 32.5 Q48.5 33 51.3 37.5 A19.7 19.7 0 1 1 35.5 17 Z" fill="#fff" stroke="#38386e" stroke-width="2.8" stroke-linejoin="round"/><circle cx="26.8" cy="30.5" r="2.8" fill="#5cc49c"/><circle cx="25.9" cy="42.3" r="2.8" fill="#5cc49c"/><circle cx="38.4" cy="42" r="2.8" fill="#5cc49c"/></svg>
<!-- outer scrollbar -->
<div class="a" style="left:1349px;top:87px;width:17px;height:641px;background:#f1f1f1"></div>
<div class="a" style="left:1351px;top:104px;width:13px;height:116px;background:#c1c1c1"></div>
<svg style="left:1349px;top:87px" width="17" height="17"><path d="M4.5 11 L8.5 6.5 L12.5 11Z" fill="#a3a3a3"/></svg>
<svg style="left:1349px;top:711px" width="17" height="17"><path d="M4.5 6 L8.5 10.5 L12.5 6Z" fill="#505050"/></svg>

<!-- ===== TASKBAR ===== -->
<div class="a" style="left:0;top:728px;width:1366px;height:40px;background:linear-gradient(90deg,#d2d3d6 0%,#d6d5d8 40%,#e2d7da 62%,#dcd6d9 80%,#d5d5d8 100%)"></div>
<svg style="left:15px;top:740px" width="18" height="17"><path d="M0 2.3 L7.3 1.3 V7.8 H0Z M8.3 1.1 L17.5 0 V7.8 H8.3Z M0 8.8 H7.3 V15.2 L0 14.2Z M8.3 8.8 H17.5 V16.5 L8.3 15.4Z" fill="#111"/></svg>
<div class="a" style="left:49px;top:729px;width:286px;height:38px;background:#fff;border:1px solid #c8c8c8"></div>
<svg style="left:59px;top:739px" width="19" height="19"><circle cx="11.5" cy="7" r="5.5" fill="none" stroke="#222" stroke-width="1.3"/><path d="M7.5 11 L1 17.5" stroke="#222" stroke-width="1.4"/></svg>
<div class="t" style="left:88px;top:741px;font-size:15px;color:#333;transform:scaleX(0.96);transform-origin:0 0">Type here to search</div>
<!-- doodle -->
<svg style="left:258px;top:729px" width="78" height="39">
 <path d="M36 39 Q20 39 8 36 Q3 28 6 18 Q4 8 14 3 Q26 -2 38 4 Q48 10 46 22 Q50 32 44 39Z" fill="#4e2c1e"/>
 <path d="M15 22 Q14 10 24 8 Q35 8 36 20 Q37 30 30 35 Q24 38 19 33 Q15 29 15 22Z" fill="#f1d9c6"/>
 <path d="M14 14 Q22 4 36 12 Q30 8 22 10 Q16 12 14 14Z" fill="#3a1e12"/>
 <path d="M22 31 Q26 33 29 31" stroke="#c24a4a" stroke-width="1.3" fill="none"/>
 <path d="M10 39 Q18 33 26 35 Q36 34 48 39Z" fill="#3c6e3a"/>
 <path d="M37 2 V28 H74" fill="none" stroke="#222" stroke-width="0.9"/>
 <path d="M34 5 L37 1 L40 5" fill="none" stroke="#222" stroke-width="0.8"/>
 <path d="M41 21 L48 9 L54 22 L60 9 L66 20 L72 12" fill="none" stroke="#666" stroke-width="0.8"/>
 <rect x="45" y="6" width="7" height="4" fill="#8bc34a"/><rect x="57" y="6" width="7" height="4" fill="#8bc34a"/><rect x="39" y="19" width="7" height="4" fill="#f0a030"/><rect x="51" y="22" width="6" height="4" fill="#30a0e0"/><rect x="63" y="18" width="7" height="4" fill="#f0a030"/>
</svg>
<!-- task view -->
<svg style="left:351px;top:739px" width="20" height="19"><path d="M1 2.5 H13 M1 16.5 H13" stroke="#111" stroke-width="1.5"/><rect x="3" y="5.5" width="8" height="8" fill="none" stroke="#111" stroke-width="1.5"/><rect x="16" y="5" width="2.5" height="3" fill="#111"/><path d="M17.2 1 V3.5 M17.2 10 V18" stroke="#111" stroke-width="1.4"/></svg>
<!-- explorer -->
<svg style="left:399px;top:739px" width="22" height="20"><path d="M1 2 H8 L10 4 H21 V18 H1Z" fill="#f3c94a"/><rect x="1" y="5" width="20" height="13" fill="#fbd96a"/><rect x="1" y="2" width="8" height="2.5" fill="#d9a829"/><path d="M6 18 V12 H16 V18 H13 V15 H9 V18Z" fill="#3e8fd8"/></svg>
<div class="a" style="left:390px;top:766px;width:40px;height:2px;background:#4a8fd8"></div>
<!-- chrome -->
<div class="a" style="left:436px;top:728px;width:50px;height:40px;background:#e8e8ea;opacity:0.7"></div>
<svg style="left:447px;top:736px" width="28" height="28"><circle cx="12" cy="12" r="11" fill="#db4437"/><path d="M12 12 L2.5 6.5 A11 11 0 0 0 12 23Z" fill="#1e9e52"/><path d="M12 12 L21.5 6.5 A11 11 0 0 1 12 23Z" fill="#fcc934"/><path d="M12 12 L12 23 A11 11 0 0 1 2.5 17.5Z" fill="#1e9e52"/><circle cx="12" cy="12" r="5" fill="#fff"/><circle cx="12" cy="12" r="3.8" fill="#3b78e7"/><circle cx="20" cy="19.5" r="7.5" fill="#12909e"/><text x="20" y="23.3" font-size="9.5" font-weight="700" fill="#fff" text-anchor="middle" font-family="Liberation Sans">R</text></svg>
<div class="a" style="left:436px;top:766px;width:48px;height:2px;background:#4a8fd8"></div>
<!-- word -->
<svg style="left:497px;top:737px" width="24" height="24"><rect x="8" y="3" width="15" height="18" fill="#fff" stroke="#6a8ac8" stroke-width="1"/><path d="M11 7 H21 M11 10 H21 M11 13 H21 M11 16 H21" stroke="#2b579a" stroke-width="1"/><path d="M0 3 L14 0.5 V23.5 L0 21Z" fill="#2b579a"/><text x="7" y="16" font-size="9" font-weight="700" fill="#fff" text-anchor="middle" font-family="Liberation Sans">W</text></svg>
<div class="a" style="left:488px;top:766px;width:42px;height:2px;background:#4a8fd8"></div>
<!-- weather -->
<svg style="left:823px;top:738px" width="26" height="18"><path d="M5 17 Q0 17 0.5 12.5 Q1 9 5 9 Q6 3 12 3 Q18 3 19.5 8.5 Q25 8.5 25 13 Q25 17 20 17Z" fill="#c8dcf0" stroke="#a8c4e4" stroke-width="0.8"/></svg>
<div class="t" style="left:857px;top:741px;font-size:13.8px;color:#111">2°C  Cloudy</div>
<!-- tray -->
<svg style="left:952px;top:739px" width="18" height="18"><rect x="0" y="0" width="17" height="17" rx="2.5" fill="#1a6fd6"/><text x="8.5" y="12" font-size="8" font-weight="700" fill="#fff" text-anchor="middle" font-family="Liberation Sans">box</text></svg>
<svg style="left:978px;top:738px" width="14" height="20"><ellipse cx="7" cy="10" rx="6.5" ry="9.5" fill="#1f7ae0"/><path d="M4 6.5 L10 12.5 L7 15 V5 L10 7.5 L4 13.5" fill="none" stroke="#fff" stroke-width="1.2"/></svg>
<svg style="left:1000px;top:739px" width="20" height="18"><rect x="1" y="6" width="11" height="11" fill="#e01b2b"/><path d="M10 1 L14 4 L10 7 L6 4Z M16 4 L19.5 6.5 L16 9 L12.5 6.5Z M14 9 L17.5 11.5 L14 14 L10.5 11.5Z" fill="#222"/></svg>
<svg style="left:1024px;top:738px" width="18" height="20"><path d="M9 1 L16.5 4 V10 Q16.5 16 9 19 Q1.5 16 1.5 10 V4Z" fill="#fff" stroke="#222" stroke-width="1.4"/><path d="M9 1.5 V18.5 M1.8 10 H16.2" stroke="#222" stroke-width="1.2"/><path d="M11 11 L15.5 19 H6.5Z" fill="#f2b800"/></svg>
<svg style="left:1047px;top:739px" width="19" height="18"><rect x="1.5" y="4.5" width="11" height="9" rx="3" fill="none" stroke="#222" stroke-width="1.4"/><path d="M12.5 7.5 L16.5 5.5 V12.5 L12.5 10.5" fill="none" stroke="#222" stroke-width="1.4"/><path d="M4 1 H10 M4 17 H10" stroke="#222" stroke-width="1.2"/></svg>
<svg style="left:1071px;top:738px" width="19" height="19"><circle cx="9.5" cy="9.5" r="8.5" fill="#2f86e6"/><path d="M9.5 4 A5.5 5.5 0 1 0 15 9.5 M9.5 7 A2.5 2.5 0 1 0 12 9.5" fill="none" stroke="#fff" stroke-width="1.4"/></svg>
<svg style="left:1096px;top:738px" width="18" height="19"><rect x="1" y="1" width="16" height="17" fill="#555" stroke="#222" stroke-width="1"/><path d="M1 4 H17 M1 7 H17 M1 10 H17 M1 13 H17 M1 16 H17" stroke="#ddd" stroke-width="0.9"/></svg>
<svg style="left:1119px;top:739px" width="18" height="18"><rect x="1" y="1" width="16" height="12" fill="#7a7a80" stroke="#3a3a6a" stroke-width="1.2"/><path d="M2 16 H7 M11 16 H16" stroke="#3a3aa0" stroke-width="1.5"/></svg>
<svg style="left:1143px;top:741px" width="18" height="14"><rect x="6" y="3" width="11" height="8" fill="#222"/><path d="M0 7 H6 M2 4 V10 M4 4 V10" stroke="#222" stroke-width="1.2"/></svg>
<svg style="left:1167px;top:740px" width="18" height="16"><path d="M1.5 5 H4.5 L8.5 1.5 V14.5 L4.5 11 H1.5Z" fill="none" stroke="#222" stroke-width="1.2"/><path d="M11 5 L16 10.5 M16 5 L11 10.5" stroke="#222" stroke-width="1.2"/></svg>
<svg style="left:1194px;top:740px" width="18" height="17"><path d="M2 15 A12 12 0 0 1 15 2 M5 15 A9 9 0 0 1 15 5 M8 15 A6 6 0 0 1 15 8 M11 15 A3 3 0 0 1 15 11" fill="none" stroke="#222" stroke-width="1.2"/><circle cx="14" cy="14" r="1.6" fill="#222"/></svg>
<div class="t" style="left:1219px;top:742px;font-size:12px;color:#111">ENG</div>
<div class="t" style="left:1258px;top:732px;font-size:12px;color:#111">5:32 AM</div>
<div class="t" style="left:1255px;top:751px;font-size:12px;color:#111">11/9/2023</div>
<svg style="left:1324px;top:737px" width="34" height="26"><path d="M2 1.5 H17 V12 H7 L3 16 V12 H2Z" fill="#111"/><path d="M5 5 H14 M5 8 H12" stroke="#fff" stroke-width="1.1"/><circle cx="17.5" cy="16" r="7" fill="#dcdcdc" stroke="#777" stroke-width="1"/><text x="17.5" y="20" font-size="11" fill="#111" text-anchor="middle" font-family="Liberation Sans">5</text></svg>

</body></html>
